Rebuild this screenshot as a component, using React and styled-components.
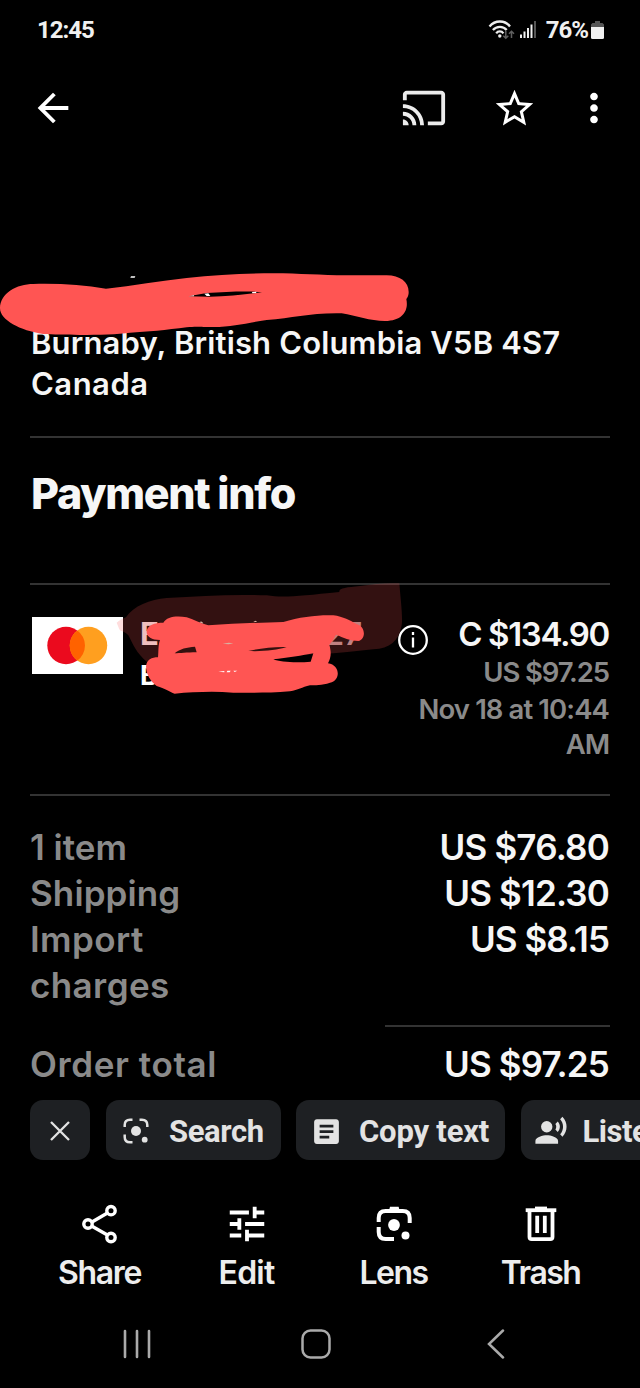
import React from "react";
import styled, { createGlobalStyle } from "styled-components";
import {
  MdArrowBack,
  MdArticle,
  MdCast,
  MdMoreVert,
  MdRecordVoiceOver,
  MdStarOutline,
  MdTune,
} from "react-icons/md";

const colors = {
  bg: "#000",
  text: "#f6f6f6",
  muted: "#8a8a8a",
  line: "#333",
  chip: "#1e2023",
  chipText: "#e3e3e3",
  marker: "#ff5553",
};

const GlobalStyle = createGlobalStyle`
  * {
    box-sizing: border-box;
  }

  body {
    margin: 0;
    background: ${colors.bg};
  }
`;

const Screen = styled.div`
  display: flex;
  flex-direction: column;
  width: 640px;
  height: 1388px;
  overflow: hidden;
  background: ${colors.bg};
  color: ${colors.text};
  font-family: Inter, "Liberation Sans", sans-serif;
  font-weight: 600;
  white-space: nowrap;

  svg {
    display: block;
    flex-shrink: 0;
  }
`;

const StatusBar = styled.div`
  display: flex;
  align-items: center;
  height: 60px;
  padding: 0 36px 0 37px;
  font-family: Roboto, sans-serif;
  font-size: 24px;
  font-weight: 700;
  letter-spacing: -1px;
  color: #f0f0f0;
`;

const StatusIcons = styled.div`
  display: flex;
  align-items: center;
  margin-left: auto;
`;

const Percent = styled.span`
  margin: 0 3px 0 9px;
`;

const TopBar = styled.div`
  display: flex;
  align-items: center;
  height: 96px;
  padding: 0 23px 0 30px;
  color: #fff;
`;

const TopActions = styled.div`
  display: flex;
  align-items: center;
  gap: 45px;
  margin-left: auto;

  svg:last-child {
    margin-left: -11px;
  }
`;

const Content = styled.div`
  display: flex;
  flex-direction: column;
  height: 944px;
  padding: 0 30px;
`;

const Address = styled.div`
  position: relative;
  height: 280px;
  padding: 166px 0 0 1px;
  font-size: 31px;
  line-height: 41px;
`;

const AddressLine = styled.div`
  letter-spacing: ${({ $track }) => $track}px;
`;

const Marker = styled.svg`
  position: absolute;
  left: -30px;
  top: ${({ $top }) => $top}px;
  pointer-events: none;
`;

const Divider = styled.div`
  flex-shrink: 0;
  height: 2px;
  width: ${({ $width }) => $width || "100%"};
  margin-top: ${({ $gap = 0 }) => $gap}px;
  margin-left: auto;
  background: ${colors.line};
`;

const Title = styled.h2`
  height: 145px;
  margin: 0;
  padding: 31px 0 0 1px;
  font-size: 43px;
  font-weight: 800;
  line-height: 48px;
  letter-spacing: -1.35px;
`;

const Payment = styled.div`
  position: relative;
  display: flex;
  height: 209px;
  padding: 26px 1px 0 0;
`;

const CardLogo = styled.div`
  display: flex;
  align-items: center;
  justify-content: center;
  width: 91px;
  height: 57px;
  margin: 6px 0 0 2px;
  background: #fff;
`;

const CardName = styled.div`
  width: 222px;
  margin-left: 17px;
`;

const CardLine = styled.div`
  display: flex;
  justify-content: space-between;
  font-size: ${({ $size }) => $size}px;
  font-weight: 700;
  line-height: ${({ $height }) => $height}px;
  color: ${({ $color }) => $color};
`;

const CardDigits = styled.span`
  font-weight: 600;
  color: #b08c8c;
`;

const InfoIcon = styled.svg`
  margin: 13px -20px 0 35px;
`;

const Amounts = styled.div`
  margin-left: auto;
  text-align: right;
`;

const Amount = styled.div`
  font-size: ${({ $size = 35 }) => $size}px;
  line-height: 46px;
  letter-spacing: ${({ $track = 0 }) => $track}px;
`;

const AmountNote = styled.div`
  margin-top: ${({ $gap = 0 }) => $gap}px;
  font-size: 27.5px;
  line-height: ${({ $height = 35 }) => $height}px;
  letter-spacing: ${({ $track = 0 }) => $track}px;
  color: ${colors.muted};
`;

const Totals = styled.div`
  padding-top: 28px;
`;

const TotalRow = styled.div`
  display: flex;
  justify-content: space-between;
  padding-right: 1px;
`;

const TotalLabel = styled(Amount)`
  width: 150px;
  color: ${colors.muted};
  white-space: ${({ $wrap }) => ($wrap ? "normal" : "nowrap")};
`;

const OrderTotal = styled(TotalRow)`
  padding-top: 14px;
`;

const Chips = styled.div`
  display: flex;
  gap: 15.5px;
  height: 60px;
  padding-left: 30px;
`;

const Chip = styled.button`
  display: flex;
  flex-shrink: 0;
  align-items: center;
  justify-content: ${({ $center }) => ($center ? "center" : "flex-start")};
  gap: ${({ $gap = 0 }) => $gap}px;
  width: ${({ $width }) => $width}px;
  height: 60px;
  padding: ${({ $pad = 0 }) => `2px 0 0 ${$pad}px`};
  border: 0;
  border-radius: 13px;
  background: ${colors.chip};
  color: ${colors.chipText};
  font-family: Roboto, sans-serif;
  font-size: 31px;
  font-weight: 700;
  letter-spacing: ${({ $track = 0 }) => $track}px;
`;

const Actions = styled.div`
  display: grid;
  grid-template-columns: repeat(4, 147px);
  height: 140px;
  padding: 41px 0 0 26px;
`;

const Action = styled.div`
  display: flex;
  flex-direction: column;
  align-items: center;
  font-size: 32px;
  line-height: 40px;
  letter-spacing: ${({ $track = 0 }) => $track}px;
  color: #ededed;

  svg {
    margin-bottom: 6px;
    color: #fff;
  }
`;

const NavBar = styled.div`
  display: grid;
  grid-template-columns: repeat(3, 179.5px);
  justify-items: center;
  align-items: center;
  height: 88px;
  padding-left: 47px;
`;

const WifiIcon = () => (
  <svg width="32" height="22" viewBox="0 0 32 22" fill="none">
    <g stroke="#ededed" strokeWidth="2.3">
      <path d="M1.5 7.5C7 .8 17 .8 22 7.5" />
      <path d="M4.9 11C8.6 6.8 15.2 6.8 18.7 11" />
      <path d="M8.2 14.3C10 11.8 13.6 11.8 15.4 14.3" />
    </g>
    <circle cx="11.8" cy="17" r="1.7" fill="#ededed" />
    <g stroke="#606060" strokeWidth="1.5">
      <path d="M17.8 12v7M15.3 16.7l2.5 2.5 2.5-2.5" />
      <path d="M23.5 19v-6.5M21 14.8l2.5-2.5 2.5 2.5" />
    </g>
  </svg>
);

const SignalIcon = () => (
  <svg width="17" height="18" viewBox="0 0 17 18" fill="#f0f0f0">
    <rect x="0" y="13.5" width="2" height="3.5" />
    <rect x="3.5" y="10.5" width="2" height="6.5" />
    <rect x="7" y="7" width="2" height="10" />
    <rect x="10.5" y="3.5" width="2" height="13.5" />
    <rect x="14" y="0" width="2" height="17" fill="#555" />
  </svg>
);

const BatteryIcon = () => (
  <svg width="13" height="18" viewBox="0 0 13 18">
    <path d="M4 0h5v2h2.5L13 3.5V7H0V3.5L1.5 2H4z" fill="#555" />
    <path d="M0 6h13v10.5q0 1.5-1.5 1.5h-10Q0 18 0 16.5z" fill="#f0f0f0" />
  </svg>
);

const MastercardLogo = () => (
  <svg width="61" height="39" viewBox="0 0 61 39">
    <circle cx="19" cy="19.5" r="18.7" fill="#eb0a1e" />
    <circle cx="41.5" cy="19.5" r="18.7" fill="#ff9f1f" />
    <path d="M30.3 4.4a18.7 18.7 0 0 1 0 30.2a18.7 18.7 0 0 1 0-30.2z" fill="#ff6200" />
  </svg>
);

const SearchIcon = () => (
  <svg width="26" height="26" viewBox="0 0 26 26" fill="none">
    <g stroke="currentColor" strokeWidth="2.5">
      <path d="M1.7 9V7q0-5.300 5.300-5.300h2.500" />
      <path d="M16.5 1.7H19q5.300 0 5.300 5.300v2" />
      <path d="M1.7 16.5V19q0 5.300 5.300 5.300h2.500" />
    </g>
    <circle cx="13" cy="13" r="5" fill="currentColor" />
    <circle cx="21.7" cy="21.7" r="2.9" fill="currentColor" />
  </svg>
);

const ShareIcon = () => (
  <svg width="46" height="46" viewBox="0 0 46 46" fill="none" stroke="currentColor" strokeWidth="3.4">
    <path d="M15 21 30 12.3M15 25.2 30 33.8" />
    <circle cx="11" cy="23" r="4.2" />
    <circle cx="34" cy="9.7" r="4.2" />
    <circle cx="34" cy="36.5" r="4.2" />
  </svg>
);

const LensIcon = () => (
  <svg width="46" height="46" viewBox="0 0 46 46" fill="none">
    <g stroke="currentColor" strokeWidth="4">
      <path d="M7.7 21v-4q0-7 7-7h17q7 0 7 7v5" />
      <path d="M7.7 26v5q0 7 7 7H23" />
    </g>
    <path d="M18 9.5 19 5.7h8.6l1 3.8z" fill="currentColor" />
    <circle cx="23" cy="24" r="5.9" fill="currentColor" />
    <circle cx="34.5" cy="34.5" r="4" fill="currentColor" />
  </svg>
);

const TrashIcon = () => (
  <svg width="46" height="46" viewBox="0 0 46 46" fill="none" stroke="currentColor" strokeWidth="3.8">
    <path d="M7.7 9.2h30.6" />
    <path d="M17 7.5h12" />
    <path d="M11.5 9v27q0 2.2 2.2 2.2h18.6q2.2 0 2.2-2.2V9" />
    <path d="M19.2 14.8V32M26.8 14.8V32" />
  </svg>
);

const AddressMarker = () => (
  <Marker $top={104} width="420" height="150" viewBox="0 0 1260 450">
    <path
      fill={colors.marker}
      d="M0 145C0 100 50 72 100 72C180 70 250 75 318 86C400 78 480 62 560 54C650 44 740 40 820 40C900 40 960 46 1040 46L1160 46C1200 46 1226 66 1226 96C1226 108 1222 112 1219 118C1226 150 1210 182 1155 183C1110 183 1070 168 1025 160C930 158 880 174 800 180C740 188 700 201 640 201C600 201 590 198 560 202C500 210 440 216 390 218C330 226 200 226 130 222C60 212 0 180 0 145Z"
    />
    <path d="M566 109L620 99C680 95 740 93 786 96C740 104 680 108 630 110Z" />
    <path
      fill="#fff"
      d="M566 109L582 106L582 109ZM613 101L625 100L631 108L620 108ZM756 96L770 95L768 99L757 100ZM393 49L406 49L404 53L391 53Z"
    />
  </Marker>
);

const PaymentMarker = () => (
  <Marker $top={-15} width="420" height="140" viewBox="0 0 1260 420">
    <path
      fill={colors.marker}
      opacity="0.2"
      d="M350 158C360 150 368 146 378 142C400 108 450 88 500 84C600 78 700 72 800 76C850 84 900 78 1018 66C1016 54 1040 52 1080 48C1120 42 1160 38 1198 40C1202 90 1210 150 1204 170C1196 212 1170 235 1120 238C1080 242 1050 246 1000 250L440 275C410 250 400 225 385 196C372 182 362 186 358 178Z"
    />
    <path
      fill={colors.marker}
      fillRule="evenodd"
      d="M440 186C440 165 465 158 490 158C500 140 530 136 560 142C580 148 600 160 625 166C700 160 780 158 850 156C900 140 960 134 1000 136C1030 140 1050 152 1070 162C1098 170 1098 208 1075 213C1050 212 1030 203 1008 194C1002 205 996 215 988 224C994 245 994 262 984 280C1022 285 1022 332 990 338C965 346 945 346 930 346C905 352 895 360 870 364C800 370 740 368 700 368C640 363 580 366 524 371C508 366 495 355 470 348C450 332 440 315 438 290C440 268 455 262 474 262C476 245 474 225 480 210C455 210 440 200 440 186Z
      M820 268C860 264 910 256 940 250L932 275C900 278 840 278 820 268Z"
    />
    <path
      fill="#33110f"
      d="M524 250C540 236 560 232 585 230L590 247C560 247 540 250 524 250ZM745 243C780 235 820 230 860 231C830 240 790 245 745 243Z"
    />
    <path fill="#fff" d="M655 305l18-2v4zM682 302l10 0-3 5h-9zM700 302h12l-8 4z" />
    <path fill="#d9b0a0" d="M668 221l18-3 14 2-14 3zM598 157q8-6 12 4zM760 156l6-4 6 4z" />
  </Marker>
);

const App = () => {
  return (
    <Screen>
      <GlobalStyle />
      <StatusBar>
        12:45
        <StatusIcons>
          <WifiIcon />
          <SignalIcon />
          <Percent>76%</Percent>
          <BatteryIcon />
        </StatusIcons>
      </StatusBar>
      <TopBar>
        <MdArrowBack size={46} />
        <TopActions>
          <MdCast size={46} color="#ececec" />
          <MdStarOutline size={45} />
          <MdMoreVert size={46} />
        </TopActions>
      </TopBar>

      <Content>
        <Address>
          <AddressLine $track={0.15}>Burnaby, British Columbia V5B 4S7</AddressLine>
          <AddressLine $track={0.5}>Canada</AddressLine>
          <AddressMarker />
        </Address>
        <Divider />
        <Title>Payment info</Title>
        <Divider />
        <Payment>
          <CardLogo>
            <MastercardLogo />
          </CardLogo>
          <CardName>
            <CardLine $size={31} $height={46} $color="#ecd9d9">
              <span>E</span>
              <CardDigits>27</CardDigits>
            </CardLine>
            <CardLine $size={27} $height={38} $color="#fff">
              B
            </CardLine>
          </CardName>
          <PaymentMarker />
          <InfoIcon width="32" height="32" viewBox="0 0 32 32" fill="none" stroke="#fff" strokeWidth="2.3">
            <circle cx="16" cy="16" r="13.8" />
            <path d="M16 13.5v10M16 8v3" />
          </InfoIcon>
          <Amounts>
            <Amount $size={33} $track={-1.35}>C $134.90</Amount>
            <AmountNote $height={30} $track={-1.1}>US $97.25</AmountNote>
            <AmountNote $gap={5} $track={-0.9}>Nov 18 at 10:44</AmountNote>
            <AmountNote $track={-1}>AM</AmountNote>
          </Amounts>
        </Payment>
        <Divider />
        <Totals>
          <TotalRow>
            <TotalLabel>1 item</TotalLabel>
            <Amount $track={-0.8}>US $76.80</Amount>
          </TotalRow>
          <TotalRow>
            <TotalLabel $track={0.1}>Shipping</TotalLabel>
            <Amount $track={-0.85}>US $12.30</Amount>
          </TotalRow>
          <TotalRow>
            <TotalLabel $wrap $track={0.4}>
              Import charges
            </TotalLabel>
            <Amount $track={-0.95}>US $8.15</Amount>
          </TotalRow>
        </Totals>
        <Divider $width="225px" $gap={17} />
        <OrderTotal>
          <TotalLabel $track={0.6}>Order total</TotalLabel>
          <Amount $track={-0.85}>US $97.25</Amount>
        </OrderTotal>
      </Content>

      <Chips>
        <Chip $width={60} $center>
          <svg width="20" height="20" viewBox="0 0 20 20" fill="none" stroke="currentColor" strokeWidth="2.3">
            <path d="M1 1l18 18M19 1L1 19" />
          </svg>
        </Chip>
        <Chip $width={175} $pad={17.5} $gap={20} $track={-0.4}>
          <SearchIcon />
          Search
        </Chip>
        <Chip $width={209} $pad={14} $gap={16} $track={-0.2}>
          <MdArticle size={33} />
          Copy text
        </Chip>
        <Chip $width={180} $pad={13} $gap={15} $track={-0.5}>
          <MdRecordVoiceOver size={34} />
          Listen
        </Chip>
      </Chips>

      <Actions>
        <Action $track={-1.3}>
          <ShareIcon />
          Share
        </Action>
        <Action $track={-0.8}>
          <MdTune size={46} />
          Edit
        </Action>
        <Action $track={-1.5}>
          <LensIcon />
          Lens
        </Action>
        <Action $track={-1.6}>
          <TrashIcon />
          Trash
        </Action>
      </Actions>

      <NavBar>
        <svg width="28" height="30" viewBox="0 0 28 30" stroke="#aaa" strokeWidth="2.6" strokeLinecap="round">
          <path d="M2 2v26M14 2v26M26 2v26" />
        </svg>
        <svg width="30" height="30" viewBox="0 0 30 30" fill="none" stroke="#aaa" strokeWidth="2.5">
          <rect x="1.5" y="1.5" width="27" height="27" rx="8" />
        </svg>
        <svg width="18" height="30" viewBox="0 0 18 30" fill="none" stroke="#aaa" strokeWidth="2.5" strokeLinecap="round">
          <path d="M16 1.5 2 15l14 13.5" />
        </svg>
      </NavBar>
    </Screen>
  );
};

export default App;
